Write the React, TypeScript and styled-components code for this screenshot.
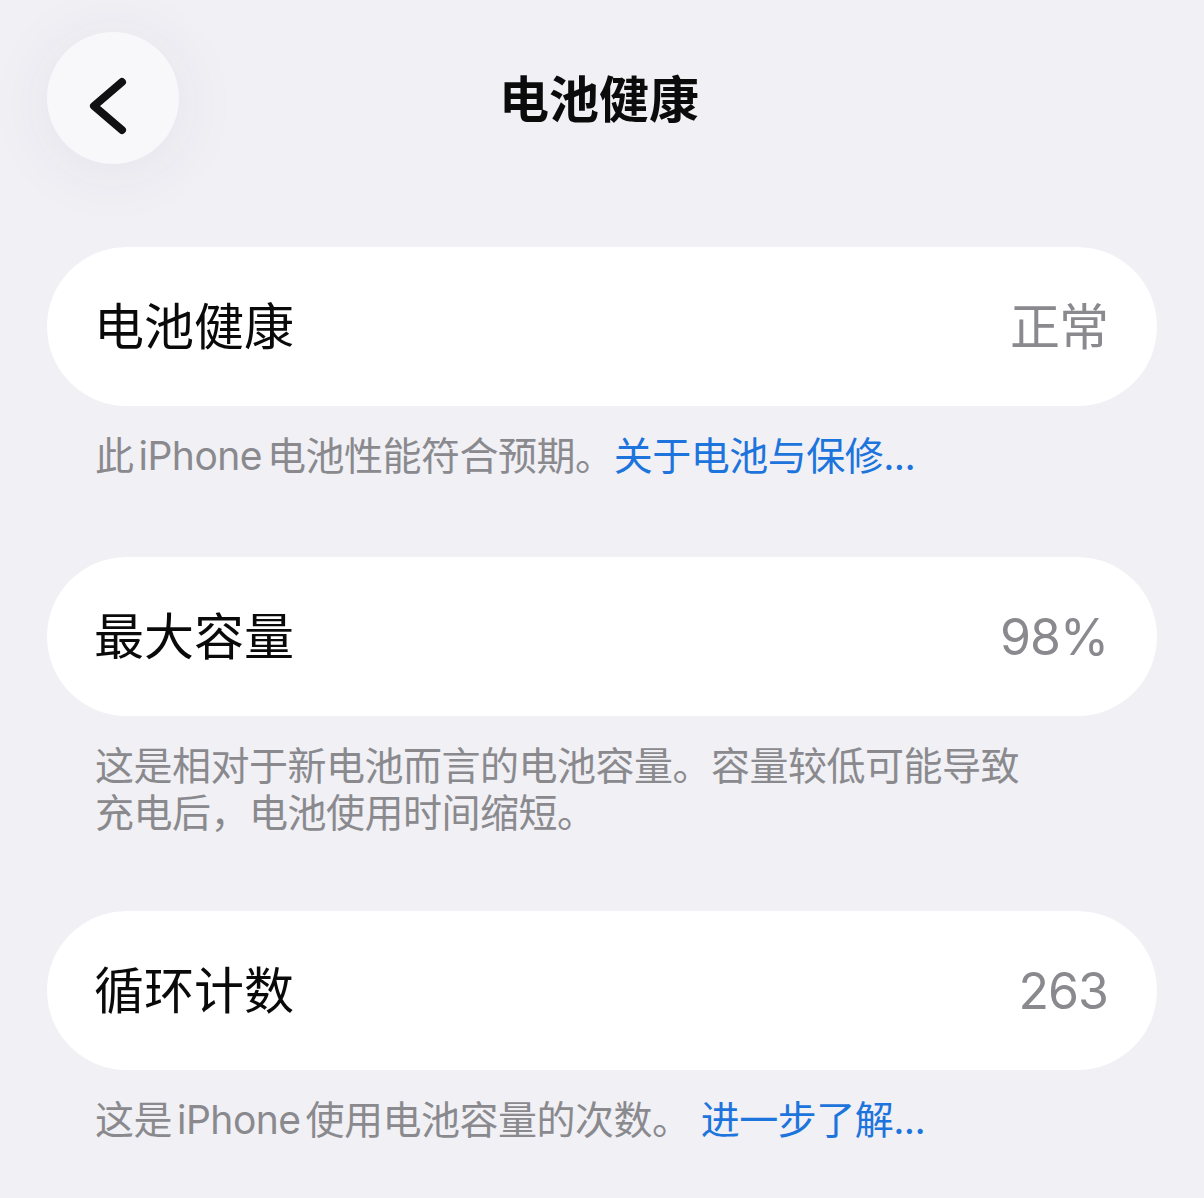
import React from 'react';
import styled, { createGlobalStyle } from 'styled-components';

const GlobalStyle = createGlobalStyle`
  html, body {
    margin: 0;
    padding: 0;
    background: #f0f0f5;
  }
  body {
    font-family: "Inter", "Noto Sans CJK SC", "Noto Sans", sans-serif;
    -webkit-font-smoothing: antialiased;
  }
`;

const Page = styled.div`
  width: 1204px;
  min-height: 1198px;
  box-sizing: border-box;
  padding: 32px 47px 0;
  background: #f0f0f5;
`;

const Header = styled.header`
  position: relative;
  height: 132px;
  display: flex;
  align-items: center;
  justify-content: center;
  margin-bottom: 83px;
`;

const BackButton = styled.button`
  position: absolute;
  left: 0;
  top: 0;
  width: 132px;
  height: 132px;
  border-radius: 50%;
  border: none;
  padding: 0;
  background: #f8f8fb;
  box-shadow: 0 6px 70px rgba(60, 60, 90, 0.07);
  display: flex;
  align-items: center;
  justify-content: center;
  cursor: pointer;
`;

const Title = styled.h1`
  margin: 0;
  font-size: 50px;
  font-weight: 700;
  color: #0b0b0c;
  line-height: 1;
  transform: translate(-3px, 2px);
`;

const Section = styled.section<{ $gap: number }>`
  margin-bottom: ${(p) => p.$gap}px;
`;

const Card = styled.div`
  height: 159px;
  border-radius: 80px;
  background: #ffffff;
  display: flex;
  align-items: center;
  justify-content: space-between;
  padding: 0 49px 0 47px;
  box-sizing: border-box;
`;

const Label = styled.span`
  font-size: 50px;
  font-weight: 400;
  color: #0a0a0a;
  line-height: 1;
`;

const Value = styled.span`
  font-size: 50px;
  font-weight: 400;
  color: #8a8a8e;
  line-height: 1;
  letter-spacing: -1px;
`;

const Footer = styled.p`
  margin: 0;
  padding: 26px 50px 0 48px;
  font-size: 39px;
  letter-spacing: -0.5px;
  line-height: 47px;
  color: #8a8a8e;
`;

const Latin = styled.span`
  margin: 0 5px;
`;

const Link = styled.a<{ $lead?: number }>`
  color: #1c74dc;
  text-decoration: none;
  margin-left: ${(p) => p.$lead ?? 0}px;
`;

function Chevron() {
  return (
    <svg width="132" height="132" viewBox="0 0 132 132" fill="none">
      <path
        d="M75 50 L47 74 L75 98"
        stroke="#111114"
        strokeWidth="8"
        strokeLinecap="round"
        strokeLinejoin="round"
      />
    </svg>
  );
}

export default function App() {
  return (
    <Page>
      <GlobalStyle />
      <Header>
        <BackButton aria-label="返回">
          <Chevron />
        </BackButton>
        <Title>电池健康</Title>
      </Header>

      <Section $gap={78}>
        <Card>
          <Label>电池健康</Label>
          <Value>正常</Value>
        </Card>
        <Footer>
          此<Latin>iPhone</Latin>电池性能符合预期。<Link href="#">关于电池与保修...</Link>
        </Footer>
      </Section>

      <Section $gap={75}>
        <Card>
          <Label>最大容量</Label>
          <Value>98%</Value>
        </Card>
        <Footer>
          这是相对于新电池而言的电池容量。容量较低可能导致
          <br />
          充电后，电池使用时间缩短。
        </Footer>
      </Section>

      <Section $gap={0}>
        <Card>
          <Label>循环计数</Label>
          <Value>263</Value>
        </Card>
        <Footer>
          这是<Latin>iPhone</Latin>使用电池容量的次数。<Link href="#" $lead={10}>进一步了解...</Link>
        </Footer>
      </Section>
    </Page>
  );
}
